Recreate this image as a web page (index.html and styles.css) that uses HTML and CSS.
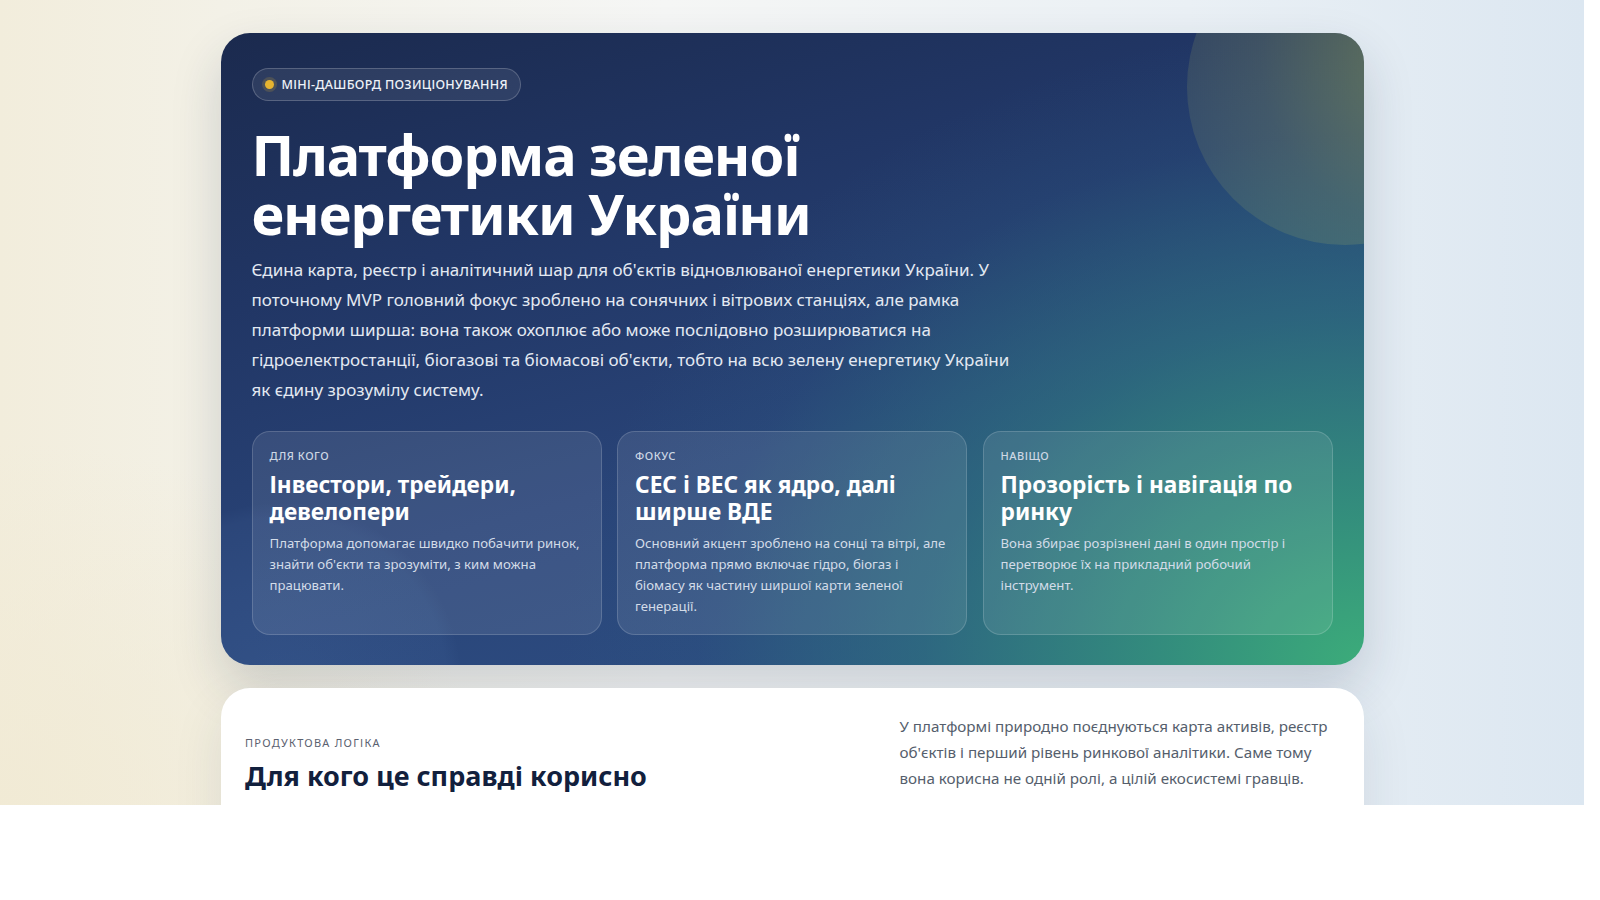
FILE: index.html
```html
<!DOCTYPE html>
<html lang="uk">
<head>
<meta charset="utf-8">
<title>Платформа зеленої енергетики України</title>
<link rel="stylesheet" href="styles.css">
</head>
<body>
<div class="frame">
  <main class="page">
    <section class="hero">
      <div class="orb orb-top"></div>
      <div class="orb orb-bottom"></div>
      <div class="hero-inner">
        <div class="badge"><span class="badge-dot"></span>Міні-дашборд позиціонування</div>
        <h1 class="hero-title">Платформа зеленої<br>енергетики України</h1>
        <p class="hero-text">Єдина карта, реєстр і аналітичний шар для об'єктів відновлюваної енергетики України. У поточному MVP головний фокус зроблено на сонячних і вітрових станціях, але рамка платформи ширша: вона також охоплює або може послідовно розширюватися на гідроелектростанції, біогазові та біомасові об'єкти, тобто на всю зелену енергетику України як єдину зрозумілу систему.</p>
        <div class="cards">
          <article class="card">
            <div class="card-label">Для кого</div>
            <h3 class="card-title">Інвестори, трейдери, девелопери</h3>
            <p class="card-text">Платформа допомагає швидко побачити ринок, знайти об'єкти та зрозуміти, з ким можна працювати.</p>
          </article>
          <article class="card">
            <div class="card-label">Фокус</div>
            <h3 class="card-title">СЕС і ВЕС як ядро, далі ширше ВДЕ</h3>
            <p class="card-text">Основний акцент зроблено на сонці та вітрі, але платформа прямо включає гідро, біогаз і біомасу як частину ширшої карти зеленої генерації.</p>
          </article>
          <article class="card">
            <div class="card-label">Навіщо</div>
            <h3 class="card-title">Прозорість і навігація по ринку</h3>
            <p class="card-text">Вона збирає розрізнені дані в один простір і перетворює їх на прикладний робочий інструмент.</p>
          </article>
        </div>
      </div>
    </section>
    <section class="logic">
      <div class="logic-head">
        <div class="logic-label">Продуктова логіка</div>
        <h2 class="logic-title">Для кого це справді корисно</h2>
      </div>
      <p class="logic-text">У платформі природно поєднуються карта активів, реєстр об'єктів і перший рівень ринкової аналітики. Саме тому вона корисна не одній ролі, а цілій екосистемі гравців.</p>
    </section>
  </main>
</div>
</body>
</html>
```

FILE: styles.css
```css
* { box-sizing: border-box; }
html, body { margin: 0; padding: 0; background: #ffffff; }
body { font-family: "Noto Sans", "Open Sans", sans-serif; }

.frame {
  width: 1584px;
  height: 805px;
  overflow: hidden;
  background:
    radial-gradient(ellipse 700px 520px at 0% 100%, rgba(241,234,212,0.9), rgba(241,234,212,0) 70%),
    linear-gradient(90deg, #f2eddc 0%, #f3f1e7 14%, #f5f6f5 42%, #eaf0f5 75%, #dce7f1 100%);
}

.page {
  width: 1143px;
  margin: 0 auto;
  padding-top: 33px;
  display: flex;
  flex-direction: column;
  gap: 23.5px;
}

.hero {
  position: relative;
  z-index: 1;
  overflow: hidden;
  border-radius: 29px;
  background:
    radial-gradient(ellipse 980px 780px at 100% 100%, rgba(60,172,122,1) 0%, rgba(52,150,124,0.88) 20%, rgba(46,120,128,0.62) 45%, rgba(42,90,130,0.2) 68%, rgba(42,80,130,0) 82%),
    linear-gradient(165deg, #1b2a4e 0%, #213665 30%, #294478 60%, #2f5186 100%);
  box-shadow: 0 22px 50px rgba(30, 45, 70, 0.18);
  color: #fff;
}

.orb {
  position: absolute;
  border-radius: 50%;
  pointer-events: none;
}
.orb-top {
  width: 316px;
  height: 316px;
  left: 966px;
  top: -104px;
  background: radial-gradient(circle at 76% 42%, rgba(190, 200, 70, 0.42), rgba(170, 180, 90, 0.22) 55%, rgba(160, 175, 110, 0.1) 100%);
}
.orb-bottom {
  width: 360px;
  height: 360px;
  left: -120px;
  top: 470px;
  background: radial-gradient(circle, rgba(120, 170, 230, 0.10), rgba(120, 170, 230, 0.05) 65%, rgba(120, 170, 230, 0) 71%);
}

.hero-inner {
  position: relative;
  padding: 35px 31px 30px;
}

.badge {
  display: inline-flex;
  align-items: center;
  gap: 8px;
  height: 33px;
  padding: 0 12px;
  border-radius: 17px;
  border: 1px solid rgba(255, 255, 255, 0.2);
  background: rgba(255, 255, 255, 0.08);
  font-size: 12.5px;
  font-weight: 500;
  letter-spacing: 0.3px;
  text-transform: uppercase;
  color: #eef2f8;
}
.badge-dot {
  width: 9px;
  height: 9px;
  border-radius: 50%;
  background: #e6b430;
  box-shadow: 0 0 0 3px rgba(230, 180, 48, 0.18);
}

.hero-title {
  margin: 24px 0 0;
  font-size: 56px;
  line-height: 59px;
  font-weight: 700;
  letter-spacing: -1.1px;
}

.hero-text {
  margin: 12px 0 0;
  max-width: 765px;
  font-size: 17px;
  line-height: 29.9px;
  color: #e3e9f2;
}

.cards {
  margin-top: 26px;
  display: grid;
  grid-template-columns: repeat(3, 1fr);
  gap: 15.5px;
}

.card {
  height: 204px;
  padding: 16px 17px;
  border-radius: 18px;
  border: 1px solid rgba(255, 255, 255, 0.16);
  background: rgba(255, 255, 255, 0.09);
}
.card-label {
  font-size: 11px;
  font-weight: 500;
  letter-spacing: 0.5px;
  text-transform: uppercase;
  color: #cdd7e4;
}
.card-title {
  margin: 8px 0 0;
  font-size: 22.7px;
  line-height: 27.5px;
  font-weight: 700;
  color: #ffffff;
}
.card-text {
  margin: 7.5px 0 0;
  font-size: 13.2px;
  line-height: 20.9px;
  color: #d3dce8;
}

.logic {
  position: relative;
  z-index: 2;
  background: #ffffff;
  border-radius: 29px;
  box-shadow: 0 20px 50px rgba(30, 45, 70, 0.10);
  padding: 25px 24px 40px 24.5px;
  display: flex;
  justify-content: space-between;
  align-items: flex-start;
  min-height: 200px;
}
.logic-head {
  padding-top: 22px;
}
.logic-label {
  font-size: 11px;
  letter-spacing: 1.25px;
  text-transform: uppercase;
  color: #5b6170;
}
.logic-title {
  margin: 8px 0 0;
  font-size: 27px;
  line-height: 36px;
  font-weight: 700;
  color: #12203d;
}
.logic-text {
  margin: 0;
  width: 440px;
  font-size: 15.2px;
  line-height: 26px;
  color: #555e6c;
}
```
